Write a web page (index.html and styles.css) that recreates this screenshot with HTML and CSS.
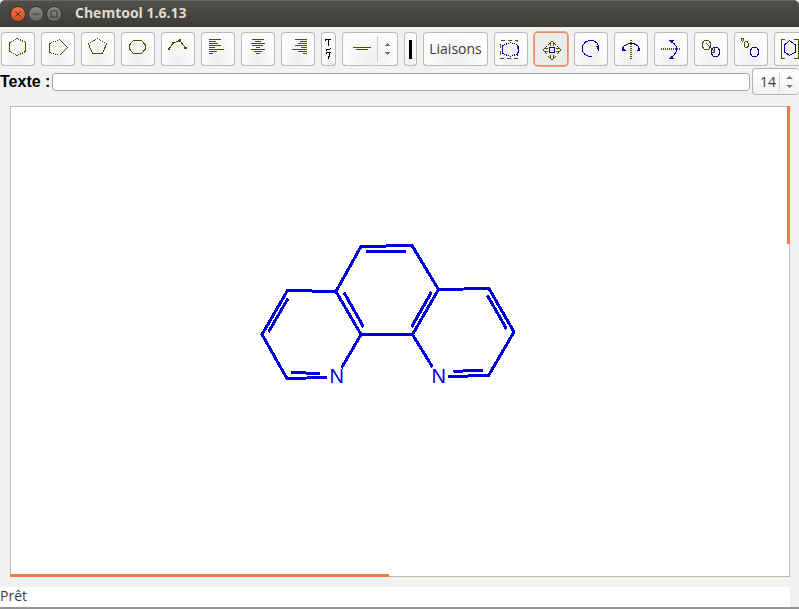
FILE: index.html
```html
<!DOCTYPE html>
<html lang="fr">
<head>
<meta charset="utf-8">
<title>Chemtool 1.6.13</title>
<link rel="stylesheet" href="styles.css">
</head>
<body>
<div class="window">
<header class="titlebar">
  <button class="wm close" aria-label="Fermer"><svg viewBox="0 0 16 16"><path d="M5 5l6 6M11 5l-6 6"/></svg></button>
  <button class="wm" aria-label="Réduire"><svg viewBox="0 0 16 16"><path d="M4 8h8"/></svg></button>
  <button class="wm" aria-label="Agrandir"><svg viewBox="0 0 16 16"><path d="M4.500 4.500h7v7h-7z"/></svg></button>
  <h1>Chemtool 1.6.13</h1>
</header>
<div class="toolbar" role="toolbar">
  <button class="tool" aria-label="Hexagone"><svg viewBox="0 0 34 34"><path class="dot" d="M8.500 10.500L16.500 6.500L24.500 10.500M8.500 19.500L16.500 23.500L24.500 19.500"/><path d="M8.500 10v10M24.500 10v10"/></svg></button>
  <button class="tool" aria-label="Pentagone droit"><svg viewBox="0 0 34 34"><path class="dot" d="M8.500 11.500L18.500 7.500M8.500 20.500L18.500 23.500"/><path d="M8.500 11v10M18.500 7.500L26.500 15.500L18.500 23.500"/></svg></button>
  <button class="tool" aria-label="Pentagone"><svg viewBox="0 0 34 34"><path class="dot" d="M7.500 12L16.500 6.500L25.500 12"/><path d="M7.500 12L11.500 21.500H21.500L25.500 12"/></svg></button>
  <button class="tool" aria-label="Octogone"><svg viewBox="0 0 34 34"><path d="M12.500 8.500H20.500L24.500 13V17L20.500 21.500H12.500L8.500 17V13Z"/></svg></button>
  <button class="tool" aria-label="Chaîne"><svg viewBox="0 0 34 34"><path d="M8 17L12 11L19 8.500L24.500 16.500"/><path class="fill" d="M7 16h2v2H7zM11 10h2v2h-2zM18 7h2v3h-2zM23 15h3v2h-3z"/></svg></button>
  <button class="tool" aria-label="Aligner à gauche"><svg viewBox="0 0 34 34"><path d="M8 7.500h12M8 9.500h7M8 11.500h9M8 13.500h12M8 15.500h6M8 17.500h15M8 19.500h8M8 21.500h4"/></svg></button>
  <button class="tool" aria-label="Centrer"><svg viewBox="0 0 34 34"><path d="M11 7.500h12M14 9.500h6M10 11.500h14M11 13.500h11M15 15.500h4M10 17.500h14M13 19.500h8M15 21.500h4"/></svg></button>
  <button class="tool" aria-label="Aligner à droite"><svg viewBox="0 0 34 34"><path d="M14 7.500h12M19 9.500h7M17 11.500h9M14 13.500h12M20 15.500h6M11 17.500h15M17 19.500h9M22 21.500h4"/></svg></button>
  <button class="tool font" aria-label="Police"><svg viewBox="0 0 15 34"><path class="ink" d="M4.500 9V7.500H10M7.500 7.500v6M5 18.500l1-1h2l2-1M5 21.500V20.500H10M8 20.500v4l-1 2"/></svg></button>
  <button class="tool bond" aria-label="Type de liaison"><svg viewBox="0 0 56 34"><path d="M11 15.500h18M14 17.500h12"/><path class="sep" d="M35.500 4v26"/><path class="arrow" d="M42 14l3.500-3l3.500 3zM42 20l3.500 3l3.500-3z"/></svg></button>
  <button class="tool thick" aria-label="Épaisseur"><svg viewBox="0 0 13 34"><path class="bar" d="M5 8h3v19H5z"/></svg></button>
  <button class="tool label">Liaisons</button>
  <button class="tool" aria-label="Sélectionner"><svg viewBox="0 0 34 34"><path class="dash" d="M6.500 8.500H23.500V26.500H6.500Z"/><path class="blue dot" d="M8.500 13.500L16.500 10.500L24.500 13.500M8.500 21.500L16.500 24.500L24.500 21.500"/><path class="blue" d="M8.500 14v7M24.500 14v7"/></svg></button>
  <button class="tool active" aria-label="Déplacer" aria-pressed="true"><svg viewBox="0 0 34 34"><path class="fill" d="M16 10h1v4h-1zM19 10h1v4h-1zM17 9h2v1h-2zM15 11h1v1h-1zM14 12h1v1h-1zM20 11h1v1h-1zM21 12h1v1h-1zM16 23h1v4h-1zM19 23h1v4h-1zM17 27h2v1h-2zM15 25h1v1h-1zM14 24h1v1h-1zM20 25h1v1h-1zM21 24h1v1h-1zM10 16h4v1h-4zM10 19h4v1h-4zM9 17h1v2h-1zM11 15h1v1h-1zM12 14h1v1h-1zM11 20h1v1h-1zM12 21h1v1h-1zM22 16h4v1h-4zM22 19h4v1h-4zM26 17h1v2h-1zM24 15h1v1h-1zM23 14h1v1h-1zM24 20h1v1h-1zM23 21h1v1h-1z"/><path class="blue" d="M15.500 15.500h5v5h-5z"/></svg></button>
  <button class="tool" aria-label="Tourner"><svg viewBox="0 0 34 34"><path class="blue" d="M17.500 24.500H15L11 22.500L8.500 19V14L11.500 10L15 8.500H19L23 11L24.500 14.500V17"/><path class="bluefill" d="M22 14h3v4h-1zM24 14h1v5h-1z"/></svg></button>
  <button class="tool" aria-label="Miroir vertical"><svg viewBox="0 0 34 34"><path class="blue" d="M9.500 17V14.500L13 12.500L15 11.500H19L22 12.500L24.500 14.500V17"/><path class="axis" d="M17 8v19"/><path class="bluefill" d="M8 15l4 4h-4zM26 15l-4 4h4z"/></svg></button>
  <button class="tool" aria-label="Miroir horizontal"><svg viewBox="0 0 34 34"><path class="blue" d="M17 9.500L20 11.500L22.500 15V19L20 23L17 25.500"/><path class="axis" d="M7 17h19"/><path class="bluefill" d="M14 8h6l-3 3zM14 27h6l-3-3z"/></svg></button>
  <button class="tool" aria-label="Copier"><svg viewBox="0 0 34 34"><path d="M10.500 8.500h4L16.500 11V15L14.500 17.500H10.500L8.500 15V11ZM12 11L20 19M20.500 16v4h-4"/><path class="blue" d="M19.500 15.500h4L25.500 18V22L23.500 24.500H19.500L17.500 22V18Z"/></svg></button>
  <button class="tool" aria-label="Échelle"><svg viewBox="0 0 34 34"><path d="M8 6.500h1L9.500 8L8.500 9.500L7.500 8ZM11.500 9.500h2L14.500 12V14L13 15.500H11.500L10.500 14V11Z"/><path class="blue" d="M18.500 15.500h4L24.500 18V22L22.500 24.500H18.500L16.500 22V18Z"/></svg></button>
  <button class="tool" aria-label="Crochets"><svg viewBox="0 0 34 34"><path d="M11 7.500H7.500V26.500H11M20 7.500h4V26.500h-4"/><path class="blue" d="M15.500 8.500L21.500 13V20L15.500 23.500L10.500 20V13Z"/></svg></button>
</div>
<div class="textrow">
  <label for="texte">Texte :</label>
  <input id="texte" type="text">
  <div class="spin"><input type="text" value="14" aria-label="Taille"><svg viewBox="0 0 20 25"><path class="sep" d="M.5 4v18"/><path class="arrow" d="M7 10l3.500-3l3.500 3zM7 16l3.500 3l3.500-3z"/></svg></div>
</div>
<main class="canvas">
  <div class="vbar"></div><div class="hbar"></div>
  <svg class="molecule" viewBox="255 235 265 155" role="img" aria-label="Phénanthroline">
    <g class="bonds">
      <path d="M341.500 368L361 334.500L336 291.500L287.500 290.500L262 334.500L287 378.500L327 377.500"/>
      <path d="M336 291.500L361 246.500L412 245.500L438.500 289.500L489 288.500L514 332L488.500 375.500L448 376.500"/>
      <path d="M432.500 367L412.500 334.500L438.500 289.500M361 334.500H412.500"/>
      <path d="M288 298.500L268.500 332M344 292.500L363.500 327M366 251.500H406M431.500 292L411.500 327M487.500 295.500L506.500 329M291 372.500L320 373.500M453.500 371.500L483 370"/>
    </g>
    <text x="329.500" y="383">N</text><text x="431.500" y="383">N</text>
  </svg>
</main>
<footer class="status">Prêt</footer>
</div>
</body>
</html>
```
FILE: styles.css
```css
* { box-sizing: border-box; }
body { margin: 0; background: #f2f1f0; font-family: "Open Sans", sans-serif; color: #3c3c3c; overflow: hidden; }
.window { display: flex; flex-direction: column; height: 100vh; border-bottom: 2px solid #969494; }
button { font: inherit; color: inherit; padding: 0; }
svg { display: block; fill: none; stroke: #505000; stroke-width: 1; }

.titlebar { flex: none; display: flex; align-items: center; gap: 2px; height: 27px; padding-left: 10px; background: linear-gradient(#504f48, #3c3b37); border-top: 1px solid #67665d; border-radius: 5px 5px 0 0; }
.titlebar h1 { margin: 0 0 2px 11px; font-size: 14px; line-height: 24px; color: #dfdbd2; font-weight: 700; }
.wm { width: 16px; height: 16px; border: 1px solid #363530; border-radius: 50%; background: linear-gradient(#8c8a82, #66655f); }
.wm svg { width: 14px; height: 14px; stroke: #32312d; }
.close { background: linear-gradient(#f37449, #dd4a1c); }

.toolbar { flex: none; display: flex; gap: 6px; padding: 5px 0 2px 1px; overflow: hidden; }
.tool { flex: none; width: 34px; height: 34px; border: 0; border-radius: 4px; background: radial-gradient(ellipse at 50% 90%, #efefef, #fcfcfc 70%); box-shadow: inset 0 0 0 1px #bdbbb8, inset 0 -1px 0 #aaa7a3; }
.tool svg { width: 100%; height: 100%; shape-rendering: crispEdges; }
.font { width: 15px; }
.bond { width: 56px; }
.thick { width: 13px; }
.label { width: 65px; padding-bottom: 2px; font-size: 14px; }
.active { background: #ebebe9; box-shadow: inset 0 0 0 1px #e58b69, 0 0 0 1px #f0a88d; }
.dot, .axis { stroke-dasharray: 1 1; }
.axis { stroke-width: 2; }
.dash { stroke-dasharray: 4 3; }
.blue { stroke: #0000a8; }
.bluefill { fill: #0000a8; stroke: none; }
.fill { fill: #505000; stroke: none; }
.ink { stroke: #000; }
.bar { fill: #000; stroke: none; }
.sep { stroke: #d2d0ce; }
.arrow { fill: #777; stroke: none; }

.textrow { flex: none; display: flex; align-items: center; height: 27px; }
.textrow label { flex: none; width: 52px; font: bold 16px "Liberation Sans", sans-serif; color: #000; white-space: nowrap; }
.textrow > input { flex: 1; min-width: 0; height: 18px; border: 1px solid #aaa7a3; border-radius: 4px; background: #fff; }
.spin { flex: none; display: flex; width: 47px; height: 27px; margin-left: 2px; border: 1px solid #b5b2af; border-right: 0; border-radius: 4px; background: linear-gradient(#fff, #f1f1f1); }
.spin input { flex: 1; min-width: 0; padding: 0 3px 0 0; border: 0; background: none; font: 14px "Open Sans", sans-serif; color: #3c3c3c; text-align: right; }
.spin svg { width: 20px; height: 25px; }

.canvas { position: relative; flex: 1; display: flex; align-items: center; justify-content: center; min-height: 0; margin: 11px 9px 10px 10px; padding-bottom: 58px; padding-right: 26px; background: #fff; border: 1px solid #bdbbb2; }
.vbar, .hbar { position: absolute; background: #ef7847; }
.vbar { top: -1px; right: -1px; width: 3px; height: 138px; }
.hbar { left: -1px; bottom: -1px; height: 3px; width: 379px; }
.molecule { flex: none; width: 265px; height: 155px; }
.bonds { stroke: #0000dc; stroke-width: 3; stroke-linejoin: round; shape-rendering: crispEdges; }
.molecule text { font: 20px "Liberation Sans", sans-serif; fill: #0000dc; stroke: none; }
.status { flex: none; height: 20px; margin-right: 9px; background: #fff; font-size: 14px; line-height: 18px; }
```
